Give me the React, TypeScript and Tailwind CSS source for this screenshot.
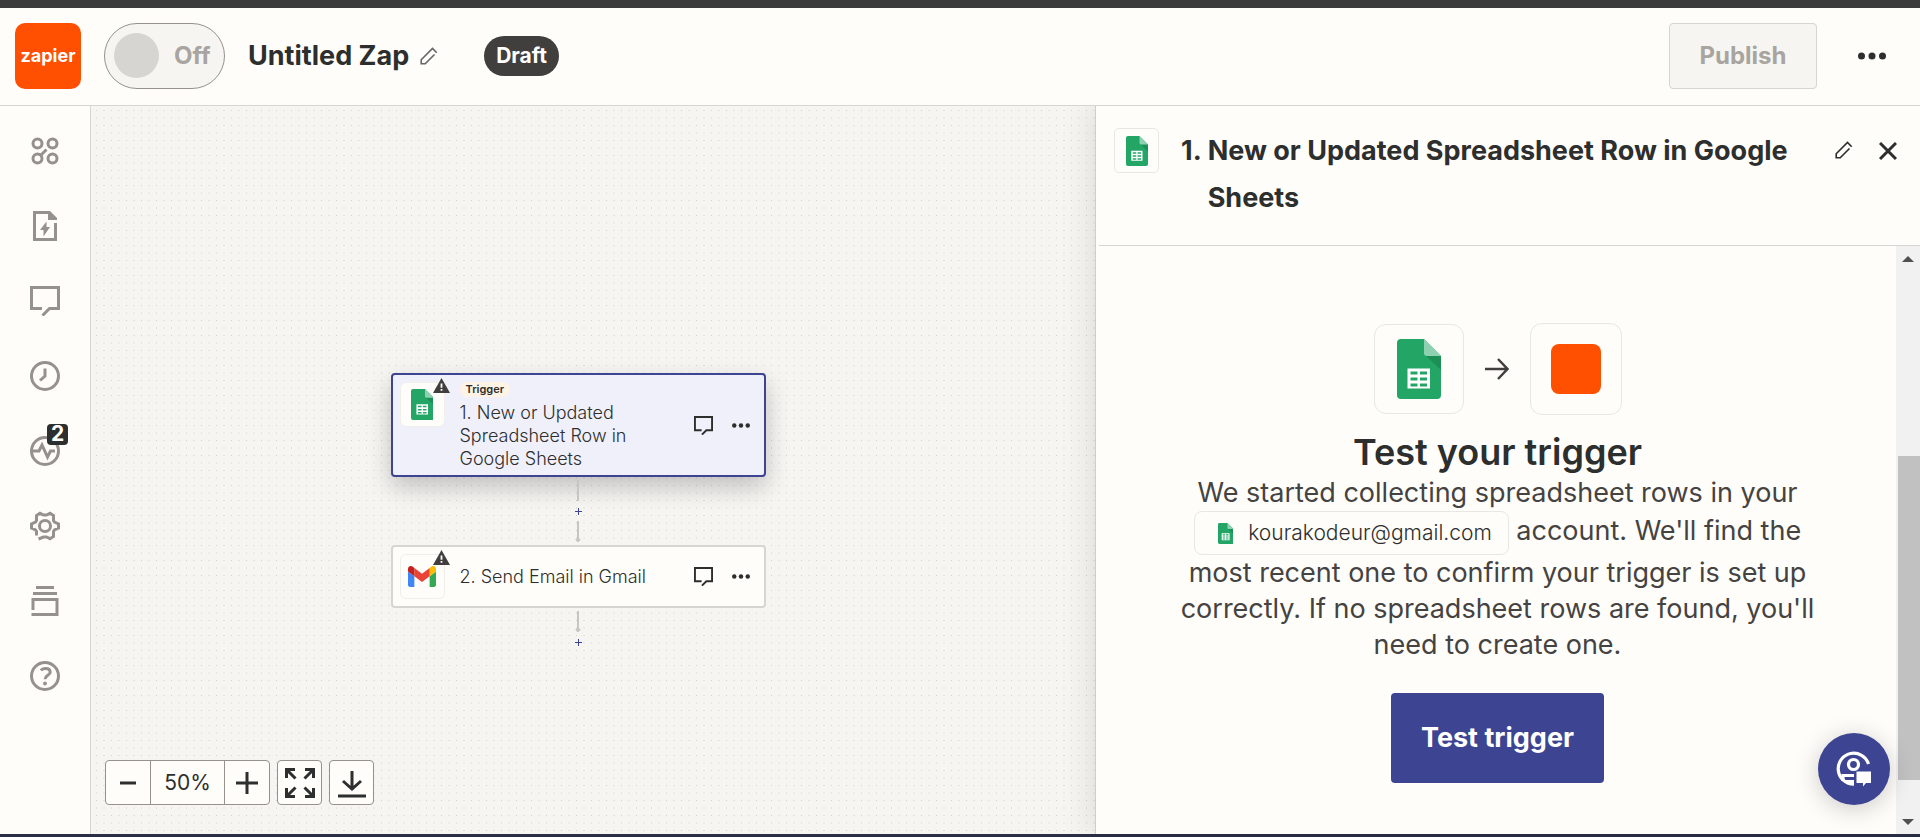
import React from "react";

type IconProps = { className?: string };

function SheetsIcon({ className }: IconProps) {
  return (
    <svg viewBox="0 0 44 60" className={className} aria-hidden="true">
      <path d="M4 0H27L44 17V56a4 4 0 0 1-4 4H4a4 4 0 0 1-4-4V4a4 4 0 0 1 4-4Z" fill="#23a566" />
      <path d="M28 16 44 31V17Z" fill="#1c8f57" />
      <path d="M27 0 44 17H30a3 3 0 0 1-3-3Z" fill="#8ed1b1" />
      <path
        fillRule="evenodd"
        fill="#fff"
        d="M10.500 29.500h22.500v20H10.500ZM13.500 32.500v3h7v-3Zm9.500 0v3h7v-3Zm-9.500 6v3h7v-3Zm9.500 0v3h7v-3Zm-9.500 6v3h7v-3Zm9.500 0v3h7v-3Z"
      />
    </svg>
  );
}

function GmailIcon({ className }: IconProps) {
  return (
    <svg viewBox="52 42 88 66" className={className} aria-hidden="true">
      <path fill="#4285f4" d="M58 108h14V74L52 59v43c0 3.320 2.690 6 6 6" />
      <path fill="#34a853" d="M120 108h14c3.320 0 6-2.690 6-6V59l-20 15" />
      <path fill="#fbbc04" d="M120 48v26l20-15v-8c0-7.420-8.470-11.650-14.400-7.200" />
      <path fill="#ea4335" d="M72 74V48l24 18 24-18v26L96 92" />
      <path fill="#c5221f" d="M52 51v8l20 15V48l-5.600-4.200c-5.940-4.450-14.400-.220-14.400 7.200" />
    </svg>
  );
}

function PencilIcon({ className }: IconProps) {
  return (
    <svg viewBox="0 0 18 18" className={className} fill="none" stroke="currentColor" strokeWidth="1.600" aria-hidden="true">
      <path d="M16.700 5.700 12.500 1.500 1.200 12.800V16.800H5.200L14.500 7.500" />
    </svg>
  );
}

function CommentIcon({ className }: IconProps) {
  return (
    <svg viewBox="0 0 30 30" className={className} fill="none" stroke="currentColor" strokeWidth="3" aria-hidden="true">
      <path d="M12 22.500H1.500v-21h27v21h-9L12.500 29.500" />
    </svg>
  );
}

function DotsIcon({ className }: IconProps) {
  return (
    <svg viewBox="0 0 28 8" className={className} fill="currentColor" aria-hidden="true">
      <circle cx="3.500" cy="4" r="3.500" />
      <circle cx="14" cy="4" r="3.500" />
      <circle cx="24.500" cy="4" r="3.500" />
    </svg>
  );
}

function WarningIcon({ className }: IconProps) {
  return (
    <svg viewBox="0 0 17 15" className={className} aria-hidden="true">
      <path d="M8.500 0 17 15H0Z" fill="#413f3d" />
      <path d="M7.600 5.500h1.800v4.200H7.600ZM7.600 11h1.800v1.800H7.600Z" fill="#fff" />
    </svg>
  );
}

function CanvasDots() {
  return (
    <svg className="absolute inset-0 size-full" aria-hidden="true">
      <defs>
        <pattern id="canvas-dots" width="15" height="15" patternUnits="userSpaceOnUse">
          <rect x="5" y="4" width="1" height="1" fill="#d3d1ce" />
          <rect x="12" y="4" width="2" height="1" fill="#e5e3e0" />
          <rect x="5" y="11" width="1" height="2" fill="#e5e3e0" />
          <rect x="12" y="11" width="2" height="2" fill="#eeece9" />
        </pattern>
      </defs>
      <rect width="100%" height="100%" fill="url(#canvas-dots)" />
    </svg>
  );
}

const railIcons: { label: string; badge?: string; art: React.ReactNode }[] = [
  {
    label: "Zap steps",
    art: (
      <>
        <circle cx="7.500" cy="7.500" r="4.500" />
        <circle cx="22.500" cy="7.500" r="4.500" />
        <circle cx="7.500" cy="22.500" r="4.500" />
        <circle cx="22.500" cy="22.500" r="4.500" />
        <path d="m10.500 19.500 6-6" />
      </>
    ),
  },
  {
    label: "Zap details",
    art: (
      <>
        <path d="M25.500 12v16.500h-21v-27H19" />
        <path d="M18 0h2l7 7v2h-9Z" fill="currentColor" stroke="none" />
        <path d="M16.500 10.500V16H20l-6.500 9.500V19H10Z" fill="currentColor" stroke="none" />
      </>
    ),
  },
  { label: "Notes", art: <path d="M12 22.500H1.500v-21h27v21h-9L12.500 29.500" /> },
  {
    label: "Zap runs",
    art: (
      <>
        <circle cx="15" cy="15" r="13.500" />
        <path d="M15 7.500V15l-5 4.500" />
      </>
    ),
  },
  {
    label: "Zap status",
    badge: "2",
    art: (
      <>
        <circle cx="15" cy="15" r="13.500" />
        <path d="M2 15h7l3-6 5.500 12 3-6H25" />
      </>
    ),
  },
  {
    label: "Settings",
    art: (
      <>
        <circle cx="15" cy="15" r="5.500" />
        <path d="M6.500 24.500v-4l-1-1.500-4-2v-4l4-2 1-1.500V4.500L10 2.300l3.500 1.700h3L20 2.300l3.500 2.200v5l1 1.500 4 2v4l-4 2-1 1.500v5L20 27.700 16.500 26h-3L8.500 28" />
      </>
    ),
  },
  {
    label: "Versions",
    art: <path d="M6 1.500h18M3 7.500h24M3 24V13.500h24v15H1.500" />,
  },
  {
    label: "Help",
    art: (
      <>
        <circle cx="15" cy="15" r="13.500" />
        <path d="M11 9.500c1-1.500 2.500-2 4.500-2 3 0 4.700 1.500 4.700 3.700 0 3-5.200 3.300-5.200 7" />
        <circle cx="15" cy="22.500" r="1.900" fill="currentColor" stroke="none" />
      </>
    ),
  },
];

function NodeActions() {
  return (
    <div className="flex items-center gap-[19px] text-[#2d2e2e]">
      <button type="button" aria-label="Add note">
        <CommentIcon className="size-[19px]" />
      </button>
      <button type="button" aria-label="Step options">
        <DotsIcon className="w-[18px]" />
      </button>
    </div>
  );
}

function NodeIcon({ children }: { children: React.ReactNode }) {
  return (
    <div className="relative flex size-[45px] shrink-0 items-center justify-center rounded-md border border-[#f0efec] bg-[#fffdf9]">
      {children}
      <WarningIcon className="absolute -top-[5px] -right-1.5 w-[17px]" />
    </div>
  );
}

function Connector({ arrow = false }: { arrow?: boolean }) {
  return (
    <svg viewBox="0 0 6 21" className="h-[21px] w-1.5" fill="none" stroke="#c8c6c2" strokeWidth="2" aria-hidden="true">
      <path d="M3 0v21" />
      {arrow && <path d="m1 18 2 2 2-2" />}
    </svg>
  );
}

function AddStep() {
  return (
    <button type="button" aria-label="Add step" className="flex h-5 w-5 items-center justify-center text-[#3d4592]">
      <svg viewBox="0 0 7 7" className="size-[7px]" stroke="currentColor" aria-hidden="true">
        <path d="M3.500 0v7M0 3.500h7" />
      </svg>
    </button>
  );
}

export default function App() {
  return (
    <div className="flex h-screen flex-col bg-[#fffdf9] font-[Inter,sans-serif] text-[#2d2e2e]">
      <div className="h-2 shrink-0 bg-[#3b3b3b]" />

      <header className="relative z-10 flex h-[98px] shrink-0 items-center border-b border-[#d7d5d2] bg-[#fffdf9] pr-[34px] pb-0.5 pl-[15px]">
        <a
          href="#home"
          className="flex size-[66px] items-center justify-center rounded-[10px] bg-[#ff4f00] text-[18px] font-bold text-white"
        >
          zapier
        </a>
        <button
          type="button"
          role="switch"
          aria-checked="false"
          className="ml-[23px] flex h-[66px] w-[121px] items-center gap-[15px] rounded-full border border-[#95928e] bg-[#f6f5f2] pl-[9px] text-[24px] font-bold text-[#a8a5a0]"
        >
          <span className="size-[45px] rounded-full bg-[#d7d5d2]" />
          Off
        </button>
        <h1 className="ml-[23px] text-[27px] leading-[42px] font-bold">Untitled Zap</h1>
        <button type="button" aria-label="Rename Zap" className="ml-[11px] text-[#666]">
          <PencilIcon className="size-[18px]" />
        </button>
        <span className="ml-[46px] flex h-10 items-center rounded-full bg-[#413f3d] px-3 text-[21px] font-bold text-white">
          Draft
        </span>
        <button
          type="button"
          className="ml-auto h-[66px] w-[148px] rounded-[4px] border border-[#d7d5d2] bg-[#f6f5f2] text-[24px] font-bold text-[#a8a5a0]"
        >
          Publish
        </button>
        <button type="button" aria-label="More options" className="ml-[41px]">
          <DotsIcon className="w-7" />
        </button>
      </header>

      <div className="flex min-h-0 flex-1">
        <nav className="flex w-[91px] shrink-0 flex-col items-center border-r border-[#d7d5d2] pt-[7px] text-[#95928e]">
          {railIcons.map((item) => (
            <button
              key={item.label}
              type="button"
              aria-label={item.label}
              className="flex h-[75px] w-full items-center justify-center"
            >
              <span className="relative">
                <svg viewBox="0 0 30 30" className="size-[30px]" fill="none" stroke="currentColor" strokeWidth="3" aria-hidden="true">
                  {item.art}
                </svg>
                {item.badge && (
                  <span className="absolute -top-3 -right-2 flex size-[21px] items-center justify-center rounded-[4px] bg-[#2d2e2e] text-[21px] font-bold text-white">
                    {item.badge}
                  </span>
                )}
              </span>
            </button>
          ))}
        </nav>

        <main className="relative flex min-w-0 flex-1 flex-col items-center bg-[#f6f5f2] pt-[267px] pr-[30px]">
          <CanvasDots />
          <section className="relative flex h-[104px] w-[375px] rounded-[4px] border-2 border-[#3d4592] bg-[#f0f0fb] pt-[7px] pl-[7px] shadow-[0_10px_24px_rgba(0,0,0,0.22)]">
            <NodeIcon>
              <SheetsIcon className="h-[31px]" />
            </NodeIcon>
            <div className="ml-[15px] flex w-[234px] flex-col items-start">
              <span className="rounded-full bg-[#fff3e6] px-1.5 text-[11px] leading-[15px] font-semibold">Trigger</span>
              <h2 className="w-[190px] pt-1 text-[18px] leading-[23px] font-light text-[#2d2e2e]">
                1. New or Updated Spreadsheet Row in Google Sheets
              </h2>
            </div>
            <div className="flex items-center pb-1.5">
              <NodeActions />
            </div>
          </section>
          <div className="relative flex flex-col items-center py-[3px]">
            <Connector />
            <AddStep />
            <Connector arrow />
          </div>
          <section className="relative flex h-[63px] w-[375px] items-center rounded-[4px] border-2 border-[#d7d5d2] bg-[#fffdf9] pl-[7px]">
            <NodeIcon>
              <GmailIcon className="w-7" />
            </NodeIcon>
            <h2 className="ml-[15px] w-[234px] text-[18px] font-light text-[#2d2e2e]">2. Send Email in Gmail</h2>
            <NodeActions />
          </section>
          <div className="relative flex flex-col items-center pt-[3px]">
            <Connector arrow />
            <AddStep />
          </div>

          <div className="absolute bottom-[29px] left-3.5 flex gap-[7px]">
            <div className="flex h-[45px] w-[165px] items-stretch rounded-[4px] border border-[#95928e] bg-[#fffdf9]">
              <button type="button" aria-label="Zoom out" className="flex w-11 items-center justify-center">
                <svg viewBox="0 0 16 16" className="size-4" stroke="currentColor" strokeWidth="3" aria-hidden="true">
                  <path d="M0 8h16" />
                </svg>
              </button>
              <output className="flex flex-1 items-center justify-center border-x border-[#95928e] text-[21px]">50%</output>
              <button type="button" aria-label="Zoom in" className="flex w-11 items-center justify-center">
                <svg viewBox="0 0 22 22" className="size-[22px]" stroke="currentColor" strokeWidth="3" aria-hidden="true">
                  <path d="M0 11h22M11 0v22" />
                </svg>
              </button>
            </div>
            <button
              type="button"
              aria-label="Fit to screen"
              className="flex size-[45px] items-center justify-center rounded-[4px] border border-[#95928e] bg-[#fffdf9]"
            >
              <svg viewBox="0 0 30 30" className="size-[30px]" fill="none" stroke="currentColor" strokeWidth="3" aria-hidden="true">
                <path d="M1.500 10V1.500H10M1.500 1.500l9 9M20 1.500h8.500V10M28.500 1.500l-9 9M1.500 20v8.500H10M1.500 28.500l9-9M20 28.500h8.500V20M28.500 28.500l-9-9" />
              </svg>
            </button>
            <button
              type="button"
              aria-label="Download"
              className="flex size-[45px] items-center justify-center rounded-[4px] border border-[#95928e] bg-[#fffdf9] pt-1"
            >
              <svg viewBox="0 0 28 27" className="h-[27px] w-7" fill="none" stroke="currentColor" strokeWidth="3" aria-hidden="true">
                <path d="M14 0v18M5 10l9 8 9-8M0 25h28" />
              </svg>
            </button>
          </div>
        </main>

        <aside className="relative flex w-[825px] shrink-0 flex-col border-l border-[#d0cecb] bg-[#fffdf9] shadow-[-4px_0_30px_rgba(0,0,0,0.1)]">
          <div className="ml-[3px] flex h-[140px] shrink-0 items-start border-b border-[#d7d5d2] pr-[23px] pl-[15px]">
            <div className="mt-[22px] flex size-[45px] shrink-0 items-center justify-center rounded-[5px] border border-[#e8e7e4]">
              <SheetsIcon className="h-[30px]" />
            </div>
            <h2 className="mt-[21px] ml-[22px] flex flex-1 gap-1.5 text-[27px] leading-[47px] font-bold">
              <span>1.</span>
              <span className="max-w-[610px]">New or Updated Spreadsheet Row in Google Sheets</span>
            </h2>
            <button type="button" aria-label="Rename step" className="mt-[35px] mr-[26px]">
              <PencilIcon className="size-[18px]" />
            </button>
            <button type="button" aria-label="Close panel" className="mt-9">
              <svg viewBox="0 0 18 18" className="size-[18px]" stroke="currentColor" strokeWidth="3" aria-hidden="true">
                <path d="m1 1 16 16M17 1 1 17" />
              </svg>
            </button>
          </div>

          <div className="ml-[3px] flex min-h-0 flex-1">
            <div className="flex flex-1 flex-col items-center pt-[77px]">
              <div className="flex items-center">
                <div className="flex size-[90px] items-center justify-center rounded-xl border border-[#e8e7e4]">
                  <SheetsIcon className="h-[60px]" />
                </div>
                <svg viewBox="0 0 24 22" className="mx-[21px] h-[22px] w-6 text-[#413f3d]" fill="none" stroke="currentColor" strokeWidth="2.500" aria-hidden="true">
                  <path d="M0 11h23M13 1l9.500 10L13 21" />
                </svg>
                <div className="flex size-[92px] items-center justify-center rounded-xl border border-[#e8e7e4]">
                  <span className="size-[50px] rounded-lg bg-[#ff4f00]" />
                </div>
              </div>
              <h3 className="pt-3.5 text-[36px] leading-[46px] font-semibold">Test your trigger</h3>
              <p className="w-[650px] text-center text-[27px] leading-9 text-[#454341]">
                We started collecting spreadsheet rows in your{" "}
                <span className="inline-flex h-11 items-center gap-[15px] rounded-lg border border-[#e8e7e4] pr-4 pl-[23px] align-middle text-[21px] leading-6 font-light text-[#2d2e2e]">
                  <SheetsIcon className="h-[21px]" />
                  kourakodeur@gmail.com
                </span>{" "}
                account. We&apos;ll find the most recent one to confirm your trigger is set up correctly. If no
                spreadsheet rows are found, you&apos;ll need to create one.
              </p>
              <button
                type="button"
                className="mt-[30px] h-[90px] w-[213px] rounded-[4px] bg-[#3d4592] text-[27px] font-bold text-white"
              >
                Test trigger
              </button>
            </div>
            <div className="flex w-6 flex-col items-center bg-[#f1f1f1] pt-2.5 pb-[9px]" aria-hidden="true">
              <svg viewBox="0 0 12 6" className="h-1.5 w-3" fill="#505050">
                <path d="M6 0l6 6H0Z" />
              </svg>
              <div className="mt-[194px] h-[324px] w-[22px] self-end bg-[#c1c1c1]" />
              <svg viewBox="0 0 12 6" className="mt-auto h-1.5 w-3" fill="#505050">
                <path d="M0 0h12L6 6Z" />
              </svg>
            </div>
          </div>

          <button
            type="button"
            aria-label="Chat with support"
            className="absolute right-[30px] bottom-[29px] flex size-[72px] items-center justify-center rounded-full bg-[#3d4592] text-white shadow-[0_4px_24px_rgba(0,0,0,0.2)]"
          >
            <svg viewBox="0 0 36 36" className="size-9" fill="none" stroke="currentColor" strokeWidth="3.200" aria-hidden="true">
              <path d="M32.500 13A15.500 15.500 0 1 0 18 33.200" />
              <circle cx="17.500" cy="13.500" r="5" />
              <path d="M7 30v-5.500h11" />
              <path d="M9 30.500h9" strokeWidth="3" />
              <path d="M20.500 20.500H35V32h-5l-3 3.500V32h-6.500Z" fill="currentColor" stroke="none" />
            </svg>
          </button>
        </aside>
      </div>

      <div className="h-[3px] shrink-0 bg-[#2b2f45]" />
    </div>
  );
}
